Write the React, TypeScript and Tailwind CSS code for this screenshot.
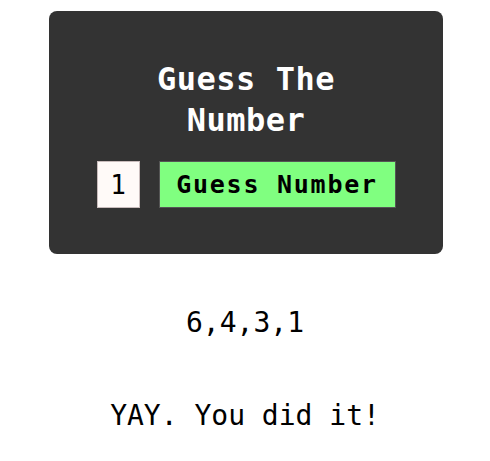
export default function App() {
  const guesses = [6, 4, 3, 1];

  return (
    <div className="min-h-screen bg-white pt-[11px] font-['DejaVu_Sans_Mono',monospace]">
      <div className="mx-auto w-[394px] translate-x-[1px] rounded-lg bg-[#333333] pt-[48px] pb-[46px] text-center">
        <h1 className="mx-auto w-[200px] text-[32px] font-bold leading-[41px] tracking-[0.5px] text-white">
          Guess The Number
        </h1>

        <div className="mt-[20px] flex items-center justify-center gap-[19px]">
          <input
            type="text"
            defaultValue="1"
            className="h-[47px] w-[43px] border border-[#c9bcbc] bg-[#fffaf8] text-center text-[26px] text-black outline-none"
          />
          <button
            type="button"
            className="h-[47px] w-[237px] border border-[#555] bg-[#80ff80] text-[25px] font-bold tracking-[1.75px] text-black"
          >
            Guess Number
          </button>
        </div>
      </div>

      <p className="mt-[48px] text-center text-[28px] text-black">{guesses.join(",")}</p>
      <p className="mt-[51px] text-center text-[28px] text-black">YAY. You did it!</p>
    </div>
  );
}
